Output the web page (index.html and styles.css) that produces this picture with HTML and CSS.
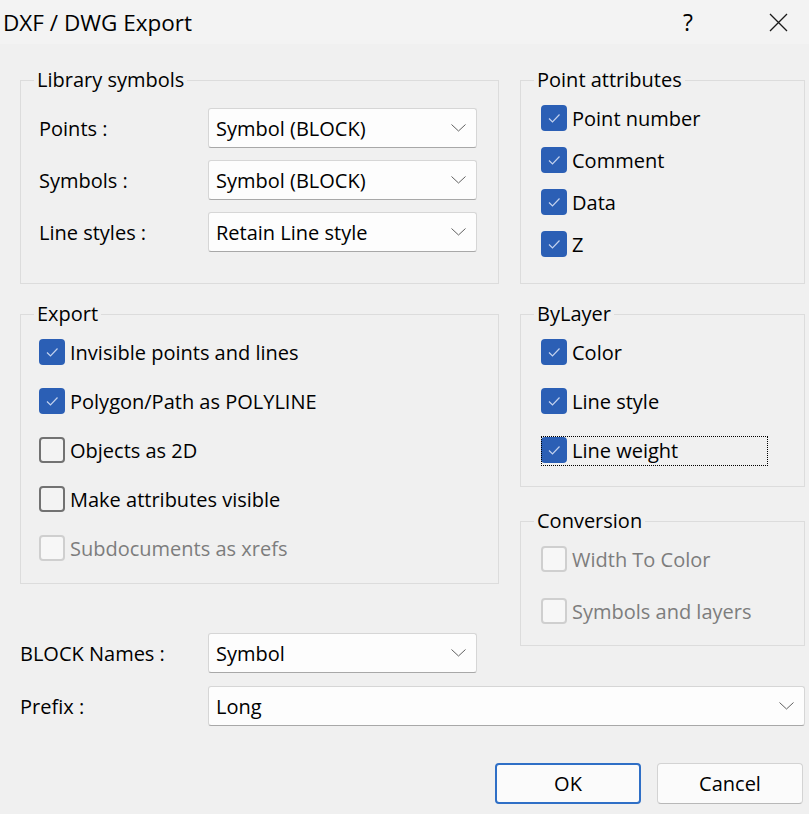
FILE: index.html
```html
<!DOCTYPE html>
<html lang="en">
<head>
<meta charset="utf-8">
<title>DXF / DWG Export</title>
<link rel="stylesheet" href="styles.css">
</head>
<body>
<div class="titlebar">
  <span class="title">DXF / DWG Export</span>
  <span class="help">?</span>
  <span class="close"><svg width="19" height="19" viewBox="0 0 19 19"><path d="M1 1L18 18M18 1L1 18" stroke="#1a1a1a" stroke-width="1.3" fill="none"/></svg></span>
</div>
<div class="main">
  <div class="cols">
    <div class="col col-left">
      <fieldset class="group lib">
        <legend>Library symbols</legend>
        <div class="field">
          <span class="label">Points :</span>
          <div class="select">Symbol (BLOCK)<svg class="chev" width="15" height="8" viewBox="0 0 15 8"><path d="M0.5 0.5L7.5 7L14.5 0.5" stroke="#606060" stroke-width="1" fill="none"/></svg></div>
        </div>
        <div class="field">
          <span class="label">Symbols :</span>
          <div class="select">Symbol (BLOCK)<svg class="chev" width="15" height="8" viewBox="0 0 15 8"><path d="M0.5 0.5L7.5 7L14.5 0.5" stroke="#606060" stroke-width="1" fill="none"/></svg></div>
        </div>
        <div class="field">
          <span class="label">Line styles :</span>
          <div class="select">Retain Line style<svg class="chev" width="15" height="8" viewBox="0 0 15 8"><path d="M0.5 0.5L7.5 7L14.5 0.5" stroke="#606060" stroke-width="1" fill="none"/></svg></div>
        </div>
      </fieldset>
      <fieldset class="group export">
        <legend>Export</legend>
        <div class="check"><span class="cb on"><svg width="26" height="26" viewBox="0 0 26 26"><path d="M8 13.5L11.5 17L18.5 9.5" stroke="#c3d2ee" stroke-width="1.2" fill="none"/></svg></span>Invisible points and lines</div>
        <div class="check"><span class="cb on"><svg width="26" height="26" viewBox="0 0 26 26"><path d="M8 13.5L11.5 17L18.5 9.5" stroke="#c3d2ee" stroke-width="1.2" fill="none"/></svg></span>Polygon/Path as POLYLINE</div>
        <div class="check"><span class="cb off"></span>Objects as 2D</div>
        <div class="check"><span class="cb off"></span>Make attributes visible</div>
        <div class="check disabled"><span class="cb dis"></span>Subdocuments as xrefs</div>
      </fieldset>
      <div class="field block-row">
        <span class="label">BLOCK Names :</span>
        <div class="select">Symbol<svg class="chev" width="15" height="8" viewBox="0 0 15 8"><path d="M0.5 0.5L7.5 7L14.5 0.5" stroke="#606060" stroke-width="1" fill="none"/></svg></div>
      </div>
    </div>
    <div class="col col-right">
      <fieldset class="group attrs">
        <legend>Point attributes</legend>
        <div class="check"><span class="cb on"><svg width="26" height="26" viewBox="0 0 26 26"><path d="M8 13.5L11.5 17L18.5 9.5" stroke="#c3d2ee" stroke-width="1.2" fill="none"/></svg></span>Point number</div>
        <div class="check"><span class="cb on"><svg width="26" height="26" viewBox="0 0 26 26"><path d="M8 13.5L11.5 17L18.5 9.5" stroke="#c3d2ee" stroke-width="1.2" fill="none"/></svg></span>Comment</div>
        <div class="check"><span class="cb on"><svg width="26" height="26" viewBox="0 0 26 26"><path d="M8 13.5L11.5 17L18.5 9.5" stroke="#c3d2ee" stroke-width="1.2" fill="none"/></svg></span>Data</div>
        <div class="check"><span class="cb on"><svg width="26" height="26" viewBox="0 0 26 26"><path d="M8 13.5L11.5 17L18.5 9.5" stroke="#c3d2ee" stroke-width="1.2" fill="none"/></svg></span>Z</div>
      </fieldset>
      <fieldset class="group bylayer">
        <legend>ByLayer</legend>
        <div class="check"><span class="cb on"><svg width="26" height="26" viewBox="0 0 26 26"><path d="M8 13.5L11.5 17L18.5 9.5" stroke="#c3d2ee" stroke-width="1.2" fill="none"/></svg></span>Color</div>
        <div class="check"><span class="cb on"><svg width="26" height="26" viewBox="0 0 26 26"><path d="M8 13.5L11.5 17L18.5 9.5" stroke="#c3d2ee" stroke-width="1.2" fill="none"/></svg></span>Line style</div>
        <div class="check focused"><span class="cb on"><svg width="26" height="26" viewBox="0 0 26 26"><path d="M8 13.5L11.5 17L18.5 9.5" stroke="#c3d2ee" stroke-width="1.2" fill="none"/></svg></span>Line weight</div>
      </fieldset>
      <fieldset class="group conversion">
        <legend>Conversion</legend>
        <div class="check disabled"><span class="cb dis"></span>Width To Color</div>
        <div class="check disabled"><span class="cb dis"></span>Symbols and layers</div>
      </fieldset>
    </div>
  </div>
  <div class="field prefix-row">
    <span class="label">Prefix :</span>
    <div class="select wide">Long<svg class="chev" width="15" height="8" viewBox="0 0 15 8"><path d="M0.5 0.5L7.5 7L14.5 0.5" stroke="#606060" stroke-width="1" fill="none"/></svg></div>
  </div>
  <div class="buttons">
    <button class="btn default">OK</button>
    <button class="btn">Cancel</button>
  </div>
</div>
</body>
</html>
```

FILE: styles.css
```css
html, body {
  margin: 0;
  padding: 0;
}
body {
  width: 809px;
  height: 814px;
  overflow: hidden;
  background: #f0f0f0;
  font-family: "Open Sans", "Noto Sans", sans-serif;
  font-size: 20px;
  color: #000;
}
.titlebar {
  height: 44px;
  background: #f3f3f3;
  display: flex;
  align-items: center;
  padding: 0 21px 0 3px;
}
.title {
  font-size: 22.5px;
  flex: 1;
}
.help {
  font-size: 23px;
  margin-right: 76px;
}
.close {
  display: flex;
}
.main {
  padding: 0 4px 0 20px;
}
.cols {
  display: flex;
  gap: 21px;
  margin-top: 24px;
}
.col {
  display: flex;
  flex-direction: column;
}
.col-left {
  width: 479px;
}
.col-right {
  width: 285px;
}
.group {
  margin: 0;
  border: 1px solid #dcdcdc;
  padding: 0 0 0 18px;
  min-width: 0;
}
.group legend {
  margin-left: -5px;
  padding: 0 3px;
  line-height: 24px;
}
.lib {
  padding-top: 16px;
  padding-bottom: 31px;
  display: flex;
  flex-direction: column;
  gap: 12px;
}
.export {
  margin-top: 18px;
  padding-top: 13px;
  padding-bottom: 22px;
  display: flex;
  flex-direction: column;
  gap: 23px;
}
.attrs,
.bylayer,
.conversion {
  padding-left: 20px;
  display: flex;
  flex-direction: column;
}
.attrs legend,
.bylayer legend,
.conversion legend {
  margin-left: -7px;
}
.attrs {
  padding-top: 13px;
  padding-bottom: 26px;
  gap: 16px;
}
.bylayer {
  margin-top: 18px;
  padding-top: 13px;
  padding-bottom: 23px;
  gap: 23px;
}
.conversion {
  margin-top: 22px;
  padding-top: 13px;
  padding-bottom: 21px;
  gap: 26px;
}
.field {
  display: flex;
  align-items: center;
  height: 40px;
}
.field .label {
  width: 169px;
  flex: none;
}
.block-row {
  margin-top: 49px;
}
.block-row .label,
.prefix-row .label {
  width: 188px;
}
.prefix-row {
  margin-top: 13px;
}
.select {
  box-sizing: border-box;
  width: 269px;
  height: 40px;
  background: #fdfdfd;
  border: 1px solid #d6d6d6;
  border-bottom-color: #a8a8a8;
  border-radius: 3px;
  display: flex;
  align-items: center;
  justify-content: space-between;
  padding: 0 10px 0 7px;
}
.select.wide {
  width: 597px;
}
.check {
  display: flex;
  align-items: center;
  height: 26px;
  gap: 5px;
  position: relative;
  white-space: nowrap;
}
.check.disabled {
  color: #7d7d7d;
}
.check.focused::after {
  content: "";
  position: absolute;
  left: 0;
  top: -1px;
  bottom: -3px;
  width: 227px;
  box-sizing: border-box;
  border: 1px dotted #000;
}
.cb {
  box-sizing: border-box;
  width: 26px;
  height: 26px;
  border-radius: 4px;
  flex: none;
  display: block;
}
.cb svg {
  display: block;
}
.cb.on {
  background: #2b5fb5;
}
.cb.off {
  border: 2px solid #727272;
  background: #f3f3f3;
}
.cb.dis {
  border: 2px solid #cfcfcf;
  background: #f7f7f7;
}
.buttons {
  display: flex;
  justify-content: flex-end;
  gap: 16px;
  margin-top: 37px;
  padding-right: 2px;
}
.btn {
  box-sizing: border-box;
  width: 146px;
  height: 41px;
  font-family: inherit;
  font-size: inherit;
  color: #000;
  background: #fbfbfb;
  border: 1px solid #d3d3d3;
  border-bottom-color: #b8b8b8;
  border-radius: 4px;
  padding: 0;
}
.btn.default {
  border: 2px solid #2f6fc6;
}
```
